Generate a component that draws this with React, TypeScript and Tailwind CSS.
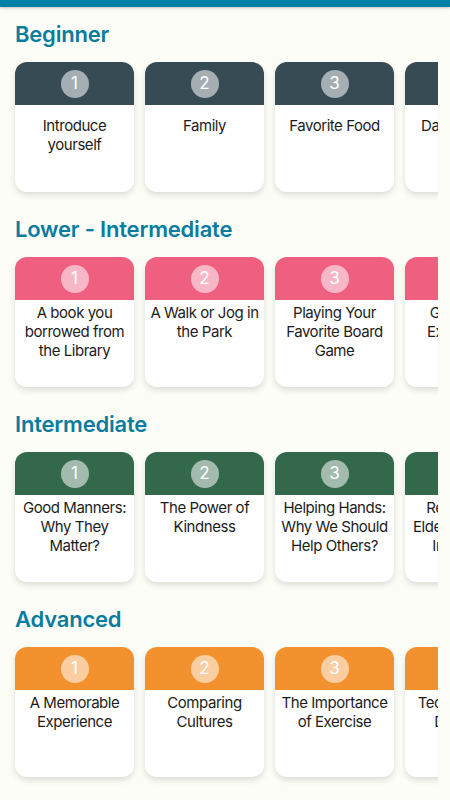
import React from 'react'

type Level = {
  title: string
  header: string
  textTop: string
  topics: string[]
}

const levels: Level[] = [
  {
    title: 'Beginner',
    header: 'bg-[#374b55]',
    textTop: 'pt-[11px]',
    topics: ['Introduce yourself', 'Family', 'Favorite Food', 'Daily Routine', 'My Hobbies'],
  },
  {
    title: 'Lower - Intermediate',
    header: 'bg-[#ef5f80]',
    textTop: 'pt-[3px]',
    topics: [
      'A book you borrowed from the Library',
      'A Walk or Jog in the Park',
      'Playing Your Favorite Board Game',
      'Gardening Experience',
      'My Best Friend',
    ],
  },
  {
    title: 'Intermediate',
    header: 'bg-[#33684a]',
    textTop: 'pt-[3px]',
    topics: [
      'Good Manners: Why They Matter?',
      'The Power of Kindness',
      'Helping Hands: Why We Should Help Others?',
      "Respect for Elders: Why It's Important",
      'Saving Money',
    ],
  },
  {
    title: 'Advanced',
    header: 'bg-[#f3912e]',
    textTop: 'pt-[3px]',
    topics: [
      'A Memorable Experience',
      'Comparing Cultures',
      'The Importance of Exercise',
      'Technology in Daily Life',
      'Climate Change',
    ],
  },
]

function TopicCard({ n, topic, level }: { n: number; topic: string; level: Level }) {
  return (
    <div className="flex h-[130px] w-[119px] shrink-0 flex-col overflow-hidden rounded-[12px] bg-white shadow-[0_3px_6px_rgba(0,0,0,0.13)]">
      <div className={`flex h-[43px] shrink-0 items-center justify-center ${level.header}`}>
        <div className="flex h-[28px] w-[28px] items-center justify-center rounded-full bg-white/55 text-[17px] leading-none text-white">
          {n}
        </div>
      </div>
      <p
        className={`px-[3px] text-center text-[15px] leading-[19px] tracking-[-0.45px] text-[#1c1c1c] ${level.textTop}`}
      >
        {topic}
      </p>
    </div>
  )
}

export default function App() {
  return (
    <div className="min-h-[800px] w-[450px] bg-[#fdfdf8]" style={{ fontFamily: 'Inter, "Noto Sans", sans-serif' }}>
      <div className="h-[7px] bg-[#0080a4] shadow-[0_1px_3px_rgba(0,0,0,0.25)]" />
      <main className="pt-[13px]">
        {levels.map((level) => (
          <section key={level.title} className="h-[195px]">
            <h2 className="px-[15px] text-[22px] font-semibold leading-[28px] tracking-[-0.2px] text-[#0a7c9e]">
              {level.title}
            </h2>
            <div className="mr-[12px] mt-[14px] overflow-hidden">
              <div className="flex gap-[11px] pb-[10px] pl-[15px]">
                {level.topics.map((topic, i) => (
                  <TopicCard key={topic} n={i + 1} topic={topic} level={level} />
                ))}
              </div>
            </div>
          </section>
        ))}
      </main>
    </div>
  )
}
